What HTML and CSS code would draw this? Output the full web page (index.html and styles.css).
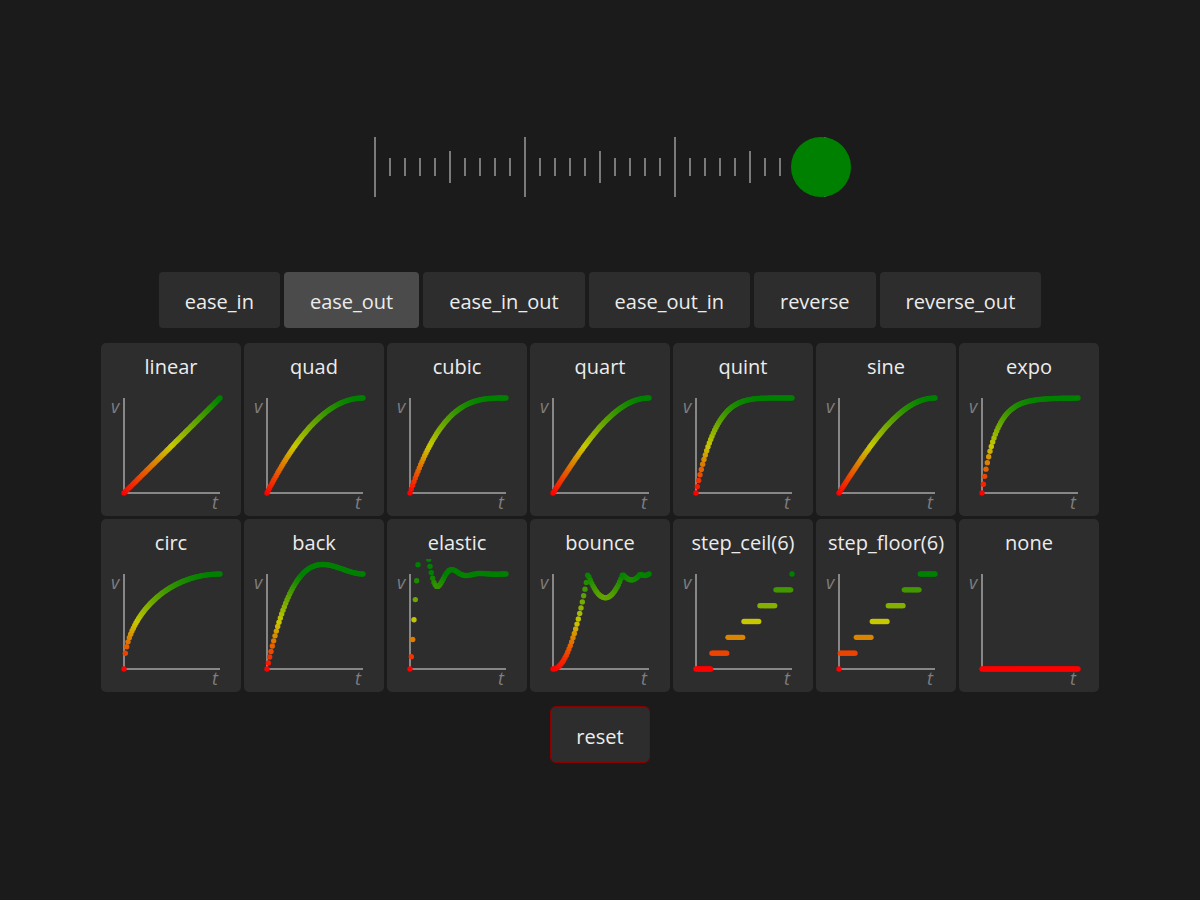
FILE: index.html
```html
<!DOCTYPE html>
<html lang="en">
<head>
<meta charset="utf-8">
<title>Easing</title>
<link rel="stylesheet" href="styles.css">
</head>
<body>
<main class="app">
  <div class="slider">
    <div class="ticks">
      <span class="tick major"></span><span class="tick"></span><span class="tick"></span><span class="tick"></span><span class="tick"></span>
      <span class="tick mid"></span><span class="tick"></span><span class="tick"></span><span class="tick"></span><span class="tick"></span>
      <span class="tick major"></span><span class="tick"></span><span class="tick"></span><span class="tick"></span><span class="tick"></span>
      <span class="tick mid"></span><span class="tick"></span><span class="tick"></span><span class="tick"></span><span class="tick"></span>
      <span class="tick major"></span><span class="tick"></span><span class="tick"></span><span class="tick"></span><span class="tick"></span>
      <span class="tick mid"></span><span class="tick"></span><span class="tick"></span><span class="tick"></span><span class="tick"></span>
      <span class="tick major"></span>
    </div>
    <div class="thumb"></div>
  </div>

  <div class="modes">
    <button class="mode">ease_in</button>
    <button class="mode active">ease_out</button>
    <button class="mode">ease_in_out</button>
    <button class="mode">ease_out_in</button>
    <button class="mode">reverse</button>
    <button class="mode">reverse_out</button>
  </div>

  <div class="grid">
    <div class="card"><div class="title">linear</div><svg class="chart" data-fn="linear" viewBox="0 0 140 133"></svg></div>
    <div class="card"><div class="title">quad</div><svg class="chart" data-fn="quad" viewBox="0 0 140 133"></svg></div>
    <div class="card"><div class="title">cubic</div><svg class="chart" data-fn="cubic" viewBox="0 0 140 133"></svg></div>
    <div class="card"><div class="title">quart</div><svg class="chart" data-fn="quart" viewBox="0 0 140 133"></svg></div>
    <div class="card"><div class="title">quint</div><svg class="chart" data-fn="quint" viewBox="0 0 140 133"></svg></div>
    <div class="card"><div class="title">sine</div><svg class="chart" data-fn="sine" viewBox="0 0 140 133"></svg></div>
    <div class="card"><div class="title">expo</div><svg class="chart" data-fn="expo" viewBox="0 0 140 133"></svg></div>
    <div class="card"><div class="title">circ</div><svg class="chart" data-fn="circ" viewBox="0 0 140 133"></svg></div>
    <div class="card"><div class="title">back</div><svg class="chart" data-fn="back" viewBox="0 0 140 133"></svg></div>
    <div class="card"><div class="title">elastic</div><svg class="chart" data-fn="elastic" viewBox="0 0 140 133"></svg></div>
    <div class="card"><div class="title">bounce</div><svg class="chart" data-fn="bounce" viewBox="0 0 140 133"></svg></div>
    <div class="card"><div class="title">step_ceil(6)</div><svg class="chart" data-fn="step_ceil" viewBox="0 0 140 133"></svg></div>
    <div class="card"><div class="title">step_floor(6)</div><svg class="chart" data-fn="step_floor" viewBox="0 0 140 133"></svg></div>
    <div class="card"><div class="title">none</div><svg class="chart" data-fn="none" viewBox="0 0 140 133"></svg></div>
  </div>

  <button class="reset">reset</button>
</main>
<script src="script.js"></script>
</body>
</html>
```

FILE: styles.css
```css
* { box-sizing: border-box; }

html, body {
  margin: 0;
  padding: 0;
  background: #1b1b1b;
}

body {
  width: 1200px;
  height: 900px;
  font-family: "Open Sans", "Noto Sans", "DejaVu Sans", sans-serif;
  color: #ececec;
}

.app {
  display: flex;
  flex-direction: column;
  align-items: center;
  padding-top: 137px;
}

/* slider */
.slider {
  position: relative;
  width: 452px;
  height: 60px;
}

.ticks {
  display: flex;
  align-items: center;
  gap: 13px;
  height: 60px;
}

.tick {
  display: block;
  width: 2px;
  height: 18px;
  background: #7a7a7a;
}

.tick.mid { height: 32px; }
.tick.major { height: 60px; }

.thumb {
  position: absolute;
  left: 417px;
  top: 0;
  width: 60px;
  height: 60px;
  border-radius: 50%;
  background: #008000;
}

/* mode buttons */
.modes {
  display: flex;
  gap: 4px;
  margin-top: 75px;
}

.mode, .reset {
  font-family: inherit;
  font-size: 20px;
  line-height: 24px;
  color: #ececec;
  background: #2d2d2d;
  border: none;
  border-radius: 4px;
  padding: 4px 26px 0;
  height: 56px;
}

.mode.active { background: #4b4b4b; }

/* cards */
.grid {
  display: grid;
  grid-template-columns: repeat(7, 140px);
  grid-auto-rows: 173px;
  gap: 3px;
  margin-top: 15px;
}

.card {
  background: #2d2d2d;
  border-radius: 5px;
  display: flex;
  flex-direction: column;
  overflow: hidden;
}

.title {
  height: 40px;
  padding-top: 12px;
  font-size: 20px;
  line-height: 24px;
  text-align: center;
  white-space: nowrap;
}

.chart {
  display: block;
  width: 140px;
  height: 133px;
}

.axis {
  fill: none;
  stroke: #878787;
  stroke-width: 2;
}

.label {
  font-family: "Open Sans", "DejaVu Sans", sans-serif;
  font-style: italic;
  font-size: 18px;
  fill: #7e7e7e;
}

/* reset */
.reset {
  margin-top: 14px;
  width: 100px;
  height: 57px;
  padding: 4px 0 0;
  border: 1px solid #8a0000;
  border-radius: 6px;
}
```

FILE: script.js
```js
(function () {
  var NS = "http://www.w3.org/2000/svg";
  var c1 = 1.70158, c3 = c1 + 1, c4 = (2 * Math.PI) / 3;

  function bounce(x) {
    var n1 = 7.5625, d1 = 2.75;
    if (x < 1 / d1) return n1 * x * x;
    if (x < 2 / d1) { x -= 1.5 / d1; return n1 * x * x + 0.75; }
    if (x < 2.5 / d1) { x -= 2.25 / d1; return n1 * x * x + 0.9375; }
    x -= 2.625 / d1; return n1 * x * x + 0.984375;
  }

  function sineOut(t) { return Math.sin(t * Math.PI / 2); }

  var fns = {
    linear: function (t) { return t; },
    quad: function (t) { return 1 - Math.pow(1 - t, 2); },
    cubic: function (t) { return 1 - Math.pow(1 - t, 3); },
    quart: sineOut,
    quint: function (t) { return 1 - Math.pow(1 - t, 5); },
    sine: sineOut,
    expo: function (t) { return t >= 1 ? 1 : 1 - Math.pow(2, -10 * t); },
    circ: function (t) { return Math.sqrt(1 - Math.pow(t - 1, 2)); },
    back: function (t) { return 1 + c3 * Math.pow(t - 1, 3) + c1 * Math.pow(t - 1, 2); },
    elastic: function (t) {
      if (t <= 0) return 0;
      if (t >= 1) return 1;
      return Math.pow(2, -10 * t) * Math.sin((t * 10 - 0.75) * c4) + 1;
    },
    bounce: bounce,
    step_ceil: function (t) { return Math.floor(t * 6 + 1e-9) / 6; },
    step_floor: function (t) { return Math.ceil(t * 6 - 1e-9) / 6; },
    none: function () { return 0; }
  };

  function color(v) {
    v = Math.max(0, Math.min(1, v));
    var r, g;
    if (v < 0.5) {
      var s = v / 0.5;
      r = 255 + (200 - 255) * s;
      g = 200 * s;
    } else {
      var u = (v - 0.5) / 0.5;
      r = 200 - 200 * u;
      g = 200 + (128 - 200) * u;
    }
    return "rgb(" + Math.round(r) + "," + Math.round(g) + ",0)";
  }

  var OX = 23, OY = 110, SX = 96, SY = 95, N = 72;

  var charts = document.querySelectorAll(".chart");
  for (var i = 0; i < charts.length; i++) {
    var svg = charts[i];
    var fn = fns[svg.getAttribute("data-fn")];

    var axis = document.createElementNS(NS, "path");
    axis.setAttribute("class", "axis");
    axis.setAttribute("d", "M" + OX + " 15 V" + OY + " H119");
    svg.appendChild(axis);

    var lv = document.createElementNS(NS, "text");
    lv.setAttribute("class", "label");
    lv.setAttribute("x", "10");
    lv.setAttribute("y", "30");
    lv.textContent = "v";
    svg.appendChild(lv);

    var lt = document.createElementNS(NS, "text");
    lt.setAttribute("class", "label");
    lt.setAttribute("x", "111");
    lt.setAttribute("y", "126");
    lt.textContent = "t";
    svg.appendChild(lt);

    for (var k = 0; k <= N; k++) {
      var t = k / N;
      var v = fn(t);
      var c = document.createElementNS(NS, "circle");
      c.setAttribute("cx", (OX + t * SX).toFixed(2));
      c.setAttribute("cy", (OY - v * SY).toFixed(2));
      c.setAttribute("r", "2.7");
      c.setAttribute("fill", color(v));
      svg.appendChild(c);
    }
  }
})();
```
